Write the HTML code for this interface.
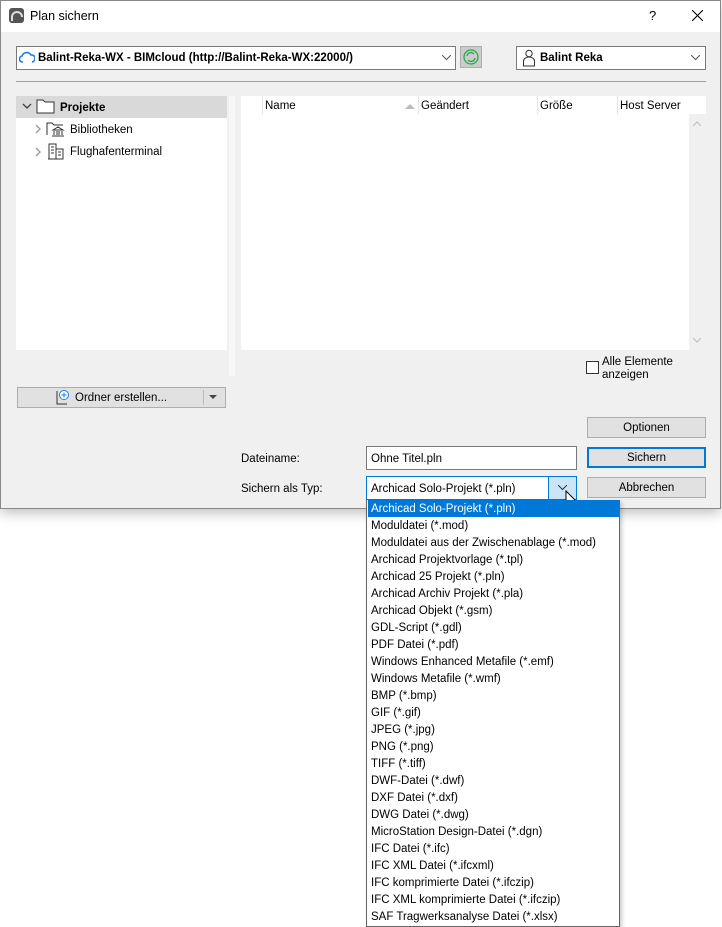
<!DOCTYPE html>
<html><head><meta charset="utf-8"><style>
*{box-sizing:border-box;margin:0;padding:0}
body{width:722px;height:927px;background:#fff;font-family:"Liberation Sans",sans-serif;font-size:11.5px;color:#000;position:relative;overflow:hidden}
.a{position:absolute}
.dlg{left:0;top:0;width:721px;height:509px;background:#f0f0f0;border:1px solid #888;box-shadow:0 4px 12px rgba(0,0,0,.25)}
.title{left:1px;top:1px;width:719px;height:31px;background:#fff}
.combo{background:#fff;border:1px solid #7a7a7a}
.btn{background:#e1e1e1;border:1px solid #adadad;text-align:center;line-height:18px}
.item{position:absolute;left:1px;width:251px;height:17px;line-height:17px;padding-left:3px;padding-top:1px;white-space:nowrap}
</style></head><body>
<div class="a dlg"></div>
<div class="a title"></div>
<svg class="a" style="left:9px;top:8px" width="15" height="15"><rect width="15" height="15" rx="3" fill="#555"/><path d="M3 13 V9 A5 5 0 0 1 13 9" stroke="#ddd" stroke-width="2" fill="none"/></svg>
<div class="a" style="left:30px;top:9px;font-size:12.5px">Plan sichern</div>
<div class="a" style="left:649px;top:8px;font-size:13px">?</div>
<svg class="a" style="left:692px;top:10px" width="11" height="11"><path d="M0 0L11 11M11 0L0 11" stroke="#000" stroke-width="1.1"/></svg>

<div class="a combo" style="left:16px;top:46px;width:440px;height:24px"></div>
<svg class="a" style="left:19px;top:51px" width="16" height="13"><path d="M4 11 A3 3 0 0 1 3 5 A5 5 0 0 1 12 4 A3.5 3.5 0 0 1 13 11" stroke="#1a7ee6" stroke-width="1.6" fill="none"/></svg>
<div class="a" style="left:38px;top:52px;font-weight:bold;font-size:11.5px">Balint-Reka-WX - BIMcloud (http://Balint-Reka-WX:22000/)</div>
<svg class="a" style="left:442px;top:55px" width="9" height="6"><path d="M0 0L4.5 4.5L9 0" stroke="#555" fill="none"/></svg>
<div class="a" style="left:460px;top:46px;width:22px;height:22px;background:#ccc;border:1px solid #adadad"></div>
<svg class="a" style="left:463px;top:49px" width="16" height="16"><circle cx="8" cy="8" r="7" fill="none" stroke="#2aa84a" stroke-width="1.3"/><path d="M4 7 A4 4 0 0 1 11 5 M12 9 A4 4 0 0 1 5 11" stroke="#2aa84a" stroke-width="1.3" fill="none"/></svg>
<div class="a combo" style="left:516px;top:46px;width:190px;height:24px"></div>
<svg class="a" style="left:522px;top:49px" width="14" height="18"><circle cx="7" cy="4.5" r="3.2" fill="none" stroke="#333"/><path d="M1.5 17V12A5.5 4 0 0 1 12.5 12V17Z" fill="none" stroke="#333"/></svg>
<div class="a" style="left:540px;top:52px;font-weight:bold">Balint Reka</div>
<svg class="a" style="left:691px;top:55px" width="9" height="6"><path d="M0 0L4.5 4.5L9 0" stroke="#555" fill="none"/></svg>
<div class="a" style="left:16px;top:81px;width:690px;height:1px;background:#a0a0a0"></div>

<div class="a" style="left:16px;top:96px;width:211px;height:254px;background:#fff"></div>
<div class="a" style="left:16px;top:96px;width:211px;height:22px;background:#d9d9d9"></div>
<svg class="a" style="left:22px;top:103px" width="10" height="7"><path d="M1 1L5 5L9 1" stroke="#444" stroke-width="1.4" fill="none"/></svg>
<svg class="a" style="left:36px;top:98px" width="20" height="16"><path d="M1 2H7L9 4H18V15H1Z" fill="#fff" stroke="#333"/></svg>
<div class="a" style="left:60px;top:102px;font-weight:bold">Projekte</div>
<svg class="a" style="left:35px;top:124px" width="6" height="10"><path d="M1 1L5 5L1 9" stroke="#999" stroke-width="1.3" fill="none"/></svg>
<svg class="a" style="left:46px;top:121px" width="20" height="17"><path d="M1 14V2H6L8 4H17" fill="none" stroke="#333"/><path d="M7 9L12 6L17 9ZM8 10V14M11 10V14M13 10V14M16 10V14M6 15H18" stroke="#333" fill="none"/></svg>
<div class="a" style="left:70px;top:124px">Bibliotheken</div>
<svg class="a" style="left:35px;top:147px" width="6" height="10"><path d="M1 1L5 5L1 9" stroke="#999" stroke-width="1.3" fill="none"/></svg>
<svg class="a" style="left:48px;top:143px" width="16" height="17"><path d="M1 16V1H8V16ZM8 6H15V16H0" fill="none" stroke="#333"/><path d="M3 4h3M3 7h3M3 10h3M10 9h3M10 12h3" stroke="#333"/></svg>
<div class="a" style="left:70px;top:146px">Flughafenterminal</div>

<div class="a" style="left:229px;top:96px;width:6px;height:280px;background:#f7f7f7"></div>
<div class="a" style="left:241px;top:96px;width:465px;height:254px;background:#fff"></div>
<div class="a" style="left:262px;top:96px;width:1px;height:18px;background:#e5e5e5"></div>
<div class="a" style="left:265px;top:100px">Name</div>
<svg class="a" style="left:405px;top:103px" width="10" height="6"><path d="M0 6L5 1L10 6Z" fill="#bbb"/></svg>
<div class="a" style="left:418px;top:96px;width:1px;height:18px;background:#e5e5e5"></div>
<div class="a" style="left:421px;top:100px">Geändert</div>
<div class="a" style="left:537px;top:96px;width:1px;height:18px;background:#e5e5e5"></div>
<div class="a" style="left:540px;top:100px">Größe</div>
<div class="a" style="left:617px;top:96px;width:1px;height:18px;background:#e5e5e5"></div>
<div class="a" style="left:620px;top:100px">Host Server</div>
<div class="a" style="left:689px;top:114px;width:17px;height:236px;background:#f0f0f0"></div>
<svg class="a" style="left:693px;top:121px" width="8" height="5"><path d="M0 5L4 1L8 5" stroke="#bbb" fill="none"/></svg>
<svg class="a" style="left:693px;top:338px" width="8" height="5"><path d="M0 0L4 4L8 0" stroke="#bbb" fill="none"/></svg>

<div class="a" style="left:586px;top:361px;width:13px;height:13px;background:#fff;border:1px solid #333"></div>
<div class="a" style="left:602px;top:356px;line-height:13px">Alle Elemente<br>anzeigen</div>

<div class="a btn" style="left:17px;top:387px;width:209px;height:21px"></div>
<svg class="a" style="left:54px;top:389px" width="16" height="16"><path d="M3 2V15H13" fill="none" stroke="#333"/><circle cx="10" cy="6" r="4.5" fill="#fff" stroke="#1a7ee6"/><path d="M10 3.5V8.5M7.5 6H12.5" stroke="#1a7ee6"/></svg>
<div class="a" style="left:75px;top:392px">Ordner erstellen...</div>
<div class="a" style="left:203px;top:390px;width:1px;height:15px;background:#bbb"></div>
<svg class="a" style="left:209px;top:395px" width="8" height="5"><path d="M0 0H8L4 4Z" fill="#444"/></svg>

<div class="a btn" style="left:587px;top:417px;width:119px;height:21px;line-height:21px">Optionen</div>
<div class="a" style="left:241px;top:453px">Dateiname:</div>
<div class="a combo" style="left:366px;top:446px;width:211px;height:24px;padding:6px 0 0 4px">Ohne Titel.pln</div>
<div class="a btn" style="left:587px;top:447px;width:119px;height:21px;border:2px solid #0078d7;line-height:19px">Sichern</div>
<div class="a" style="left:241px;top:483px">Sichern als Typ:</div>
<div class="a combo" style="left:366px;top:476px;width:211px;height:24px;padding:6px 0 0 4px;border-color:#0078d7">Archicad Solo-Projekt (*.pln)</div>
<div class="a" style="left:548px;top:477px;width:28px;height:22px;background:#cce4f7;border-left:1px solid #0078d7"></div>
<svg class="a" style="left:558px;top:485px" width="9" height="6"><path d="M0 0L4.5 4.5L9 0" stroke="#333" fill="none"/></svg>
<div class="a btn" style="left:587px;top:477px;width:119px;height:21px;line-height:21px">Abbrechen</div>
<svg class="a" style="left:565px;top:490px" width="14" height="22"><path d="M1 1V17L5 13L8 20L10 19L7 12H12Z" fill="#fff" stroke="#000"/></svg>

<div class="a" style="left:366px;top:500px;width:254px;height:427px;background:#fff;border:1px solid #646464;border-top:none;box-shadow:2px 2px 4px rgba(0,0,0,.2)">
<div class="item" style="top:0;background:#0078d7;color:#fff">Archicad Solo-Projekt (*.pln)</div>
<div class="item" style="top:17px">Moduldatei (*.mod)</div>
<div class="item" style="top:34px">Moduldatei aus der Zwischenablage (*.mod)</div>
<div class="item" style="top:51px">Archicad Projektvorlage (*.tpl)</div>
<div class="item" style="top:68px">Archicad 25 Projekt (*.pln)</div>
<div class="item" style="top:85px">Archicad Archiv Projekt (*.pla)</div>
<div class="item" style="top:102px">Archicad Objekt (*.gsm)</div>
<div class="item" style="top:119px">GDL-Script (*.gdl)</div>
<div class="item" style="top:136px">PDF Datei (*.pdf)</div>
<div class="item" style="top:153px">Windows Enhanced Metafile (*.emf)</div>
<div class="item" style="top:170px">Windows Metafile (*.wmf)</div>
<div class="item" style="top:187px">BMP (*.bmp)</div>
<div class="item" style="top:204px">GIF (*.gif)</div>
<div class="item" style="top:221px">JPEG (*.jpg)</div>
<div class="item" style="top:238px">PNG (*.png)</div>
<div class="item" style="top:255px">TIFF (*.tiff)</div>
<div class="item" style="top:272px">DWF-Datei (*.dwf)</div>
<div class="item" style="top:289px">DXF Datei (*.dxf)</div>
<div class="item" style="top:306px">DWG Datei (*.dwg)</div>
<div class="item" style="top:323px">MicroStation Design-Datei (*.dgn)</div>
<div class="item" style="top:340px">IFC Datei (*.ifc)</div>
<div class="item" style="top:357px">IFC XML Datei (*.ifcxml)</div>
<div class="item" style="top:374px">IFC komprimierte Datei (*.ifczip)</div>
<div class="item" style="top:391px">IFC XML komprimierte Datei (*.ifczip)</div>
<div class="item" style="top:408px">SAF Tragwerksanalyse Datei (*.xlsx)</div>
</div>
</body></html>
